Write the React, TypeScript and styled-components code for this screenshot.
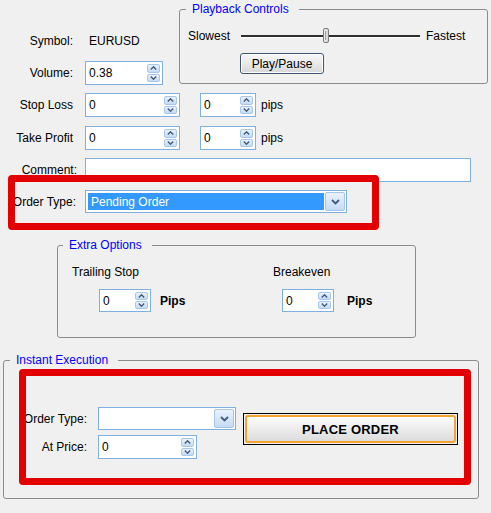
import React from 'react';
import styled, { createGlobalStyle } from 'styled-components';

const GlobalStyle = createGlobalStyle`
  html, body {
    margin: 0;
    padding: 0;
    background: #f0f0f0;
  }
  body {
    font-family: "Liberation Sans", Arial, sans-serif;
    font-size: 12px;
    color: #000;
  }
`;

const Window = styled.div`
  position: relative;
  width: 491px;
  height: 513px;
  overflow: hidden;
  display: flex;
  flex-direction: column;
  align-items: flex-start;
`;

const TopRow = styled.div`
  display: flex;
  align-items: flex-start;
  height: 85px;
`;

const LeftCol = styled.div`
  width: 179px;
  display: flex;
  flex-direction: column;
`;

const Row = styled.div<{ $top: number; $h?: number }>`
  display: flex;
  align-items: center;
  margin-top: ${p => p.$top}px;
  height: ${p => p.$h ?? 24}px;
`;

const Label = styled.span<{ $w?: number; $pad?: number }>`
  box-sizing: border-box;
  flex: none;
  width: ${p => p.$w ?? 85}px;
  padding-right: ${p => p.$pad ?? 12}px;
  text-align: right;
  white-space: nowrap;
  line-height: 14px;
`;

const Value = styled.span`
  margin-left: 4px;
  line-height: 14px;
`;

const Unit = styled.span<{ $gap: number; $bold?: boolean }>`
  margin-left: ${p => p.$gap}px;
  font-weight: ${p => (p.$bold ? 'bold' : 'normal')};
  line-height: 14px;
`;

/* group boxes */
const Group = styled.fieldset<{ $left: number; $top: number; $w: number; $h: number }>`
  box-sizing: border-box;
  margin: ${p => p.$top}px 0 0 ${p => p.$left}px;
  padding: 0;
  width: ${p => p.$w}px;
  height: ${p => p.$h}px;
  min-inline-size: 0;
  border: 1px solid #8c8c8c;
  border-radius: 3px;
`;

const Legend = styled.legend<{ $ml: number }>`
  margin-left: ${p => p.$ml}px;
  padding: 0 10px 0 6px;
  color: #0000ff;
  line-height: 14px;
`;

/* inputs */
const TextBox = styled.div<{ $w: number; $h?: number }>`
  box-sizing: border-box;
  flex: none;
  display: flex;
  align-items: center;
  width: ${p => p.$w}px;
  height: ${p => p.$h ?? 24}px;
  padding: 2px 2px 2px 3px;
  border: 1px solid #7eb0e3;
  background: #fff;
`;

const BoxText = styled.span`
  flex: 1;
  line-height: 14px;
`;

const Spinner = styled.div`
  display: flex;
  flex-direction: column;
  gap: 1px;
  width: 13px;
  align-self: stretch;
`;

const NubButton = styled.div`
  box-sizing: border-box;
  flex: 1;
  display: flex;
  align-items: center;
  justify-content: center;
  border: 1px solid #a6c6ea;
  border-radius: 2px;
  background: linear-gradient(#e9f2fc, #c4dbf4);
`;

const Combo = styled.div<{ $w: number }>`
  box-sizing: border-box;
  flex: none;
  display: flex;
  width: ${p => p.$w}px;
  height: 23px;
  padding: 1px;
  border: 1px solid #7eb0e3;
  background: #fff;
`;

const ComboText = styled.div<{ $selected?: boolean }>`
  flex: 1;
  display: flex;
  align-items: center;
  margin: 1px;
  padding-left: 3px;
  background: ${p => (p.$selected ? '#3399ff' : 'transparent')};
  color: ${p => (p.$selected ? '#fff' : '#000')};
  line-height: 14px;
`;

const DropButton = styled(NubButton)`
  flex: none;
  width: 20px;
`;

/* playback */
const SliderRow = styled.div`
  display: flex;
  align-items: center;
  height: 16px;
  margin: 12px 0 0 8px;
`;

const Track = styled.div`
  position: relative;
  width: 179px;
  height: 2px;
  margin: 0 6px 0 11px;
  background: #2e2e2e;
  border-bottom: 1px solid #fff;
`;

const Thumb = styled.div`
  position: absolute;
  left: 82px;
  top: -7px;
  box-sizing: border-box;
  width: 6px;
  height: 15px;
  border: 1px solid #7a7a7a;
  border-radius: 2px;
  background: linear-gradient(to right, #f2f2f2, #d4d4d4);

  &::after {
    content: '';
    position: absolute;
    left: 1px;
    top: 2px;
    bottom: 2px;
    width: 1px;
    background: #8fa890;
  }
`;

const PushButton = styled.div`
  box-sizing: border-box;
  display: flex;
  align-items: center;
  justify-content: center;
  width: 84px;
  height: 21px;
  margin: 9px 0 0 60px;
  border: 1px solid #3e5674;
  border-radius: 3px;
  background: linear-gradient(#f7f7f7, #e9e9e9 50%, #d7d7d7);
  box-shadow: inset 0 0 0 1px #fff;
  line-height: 14px;
`;

/* extra options */
const OptionsRow = styled.div`
  display: flex;
  margin: 13px 0 0 14px;
`;

const OptionCol = styled.div<{ $w?: number }>`
  display: flex;
  flex-direction: column;
  width: ${p => (p.$w ? `${p.$w}px` : 'auto')};
`;

const OptionTitle = styled.div`
  line-height: 14px;
`;

const OptionField = styled.div<{ $indent: number }>`
  display: flex;
  align-items: center;
  margin: 10px 0 0 ${p => p.$indent}px;
`;

/* instant execution */
const ExecRow = styled.div`
  display: flex;
  align-items: flex-start;
  margin-top: 40px;
`;

const ExecForm = styled.div`
  display: flex;
  flex-direction: column;
  gap: 5px;
`;

const ExecLine = styled.div`
  display: flex;
  align-items: center;
`;

const PlaceButton = styled.div`
  box-sizing: border-box;
  width: 215px;
  height: 32px;
  margin: 6px 0 0 7px;
  padding: 1px;
  border: 1px solid #000;
`;

const PlaceFace = styled.div`
  box-sizing: border-box;
  display: flex;
  align-items: center;
  justify-content: center;
  height: 100%;
  border: 2px solid #f2a332;
  border-radius: 3px;
  background: linear-gradient(#fcfcfc, #ececec 50%, #dcdcdc);
  font-weight: bold;
  font-size: 13px;
  letter-spacing: 0.2px;
`;

/* red annotation frames drawn over the form */
const Highlight = styled.div<{ $x: number; $y: number; $w: number; $h: number }>`
  position: absolute;
  left: ${p => p.$x}px;
  top: ${p => p.$y}px;
  width: ${p => p.$w}px;
  height: ${p => p.$h}px;
  box-sizing: border-box;
  border: 7px solid #e30000;
  border-radius: 4px;
  pointer-events: none;
`;

const Chevron = ({ up, w = 7 }: { up?: boolean; w?: number }) => (
  <svg width={w} height={4} viewBox="0 0 7 4">
    <path
      d={up ? 'M0.8 3.5 L3.5 0.8 L6.2 3.5' : 'M0.8 0.5 L3.5 3.2 L6.2 0.5'}
      fill="none"
      stroke="#405a7e"
      strokeWidth={1.4}
    />
  </svg>
);

const SpinBox = ({ value, w, h }: { value: string; w: number; h?: number }) => (
  <TextBox $w={w} $h={h}>
    <BoxText>{value}</BoxText>
    <Spinner>
      <NubButton>
        <Chevron up />
      </NubButton>
      <NubButton>
        <Chevron />
      </NubButton>
    </Spinner>
  </TextBox>
);

const DropDown = ({ w, text }: { w: number; text?: string }) => (
  <Combo $w={w}>
    <ComboText $selected={!!text}>{text}</ComboText>
    <DropButton>
      <svg width={9} height={6} viewBox="0 0 9 6">
        <path d="M1 1 L4.5 4.5 L8 1" fill="none" stroke="#405a7e" strokeWidth={1.8} />
      </svg>
    </DropButton>
  </Combo>
);

export default function App() {
  return (
    <>
      <GlobalStyle />
      <Window>
        <TopRow>
          <LeftCol>
            <Row $top={31} $h={20}>
              <Label>Symbol:</Label>
              <Value>EURUSD</Value>
            </Row>
            <Row $top={10}>
              <Label>Volume:</Label>
              <SpinBox value="0.38" w={78} />
            </Row>
          </LeftCol>
          <Group $left={0} $top={2} $w={309} $h={82}>
            <Legend $ml={6}>Playback Controls</Legend>
            <SliderRow>
              <span>Slowest</span>
              <Track>
                <Thumb />
              </Track>
              <span>Fastest</span>
            </SliderRow>
            <PushButton>Play/Pause</PushButton>
          </Group>
        </TopRow>

        <Row $top={8}>
          <Label>Stop Loss</Label>
          <SpinBox value="0" w={95} />
          <Unit $gap={20}>
            <SpinBox value="0" w={56} />
          </Unit>
          <Unit $gap={5}>pips</Unit>
        </Row>
        <Row $top={9}>
          <Label>Take Profit</Label>
          <SpinBox value="0" w={95} />
          <Unit $gap={20}>
            <SpinBox value="0" w={56} />
          </Unit>
          <Unit $gap={5}>pips</Unit>
        </Row>
        <Row $top={8}>
          <Label $pad={8}>Comment:</Label>
          <TextBox $w={386} />
        </Row>
        <Row $top={8} $h={23}>
          <Label $pad={9}>Order Type:</Label>
          <DropDown w={262} text="Pending Order" />
        </Row>

        <Group $left={57} $top={25} $w={359} $h={100}>
          <Legend $ml={5}>Extra Options</Legend>
          <OptionsRow>
            <OptionCol $w={201}>
              <OptionTitle>Trailing Stop</OptionTitle>
              <OptionField $indent={27}>
                <SpinBox value="0" w={52} h={23} />
                <Unit $gap={9} $bold>Pips</Unit>
              </OptionField>
            </OptionCol>
            <OptionCol>
              <OptionTitle>Breakeven</OptionTitle>
              <OptionField $indent={9}>
                <SpinBox value="0" w={52} h={23} />
                <Unit $gap={13} $bold>Pips</Unit>
              </OptionField>
            </OptionCol>
          </OptionsRow>
        </Group>

        <Group $left={3} $top={15} $w={476} $h={146}>
          <Legend $ml={6}>Instant Execution</Legend>
          <ExecRow>
            <ExecForm>
              <ExecLine>
                <Label $w={94} $pad={11}>Order Type:</Label>
                <DropDown w={138} />
              </ExecLine>
              <ExecLine>
                <Label $w={94} $pad={11}>At Price:</Label>
                <SpinBox value="0" w={99} />
              </ExecLine>
            </ExecForm>
            <PlaceButton>
              <PlaceFace>PLACE ORDER</PlaceFace>
            </PlaceButton>
          </ExecRow>
        </Group>

        <Highlight $x={8} $y={175} $w={371} $h={55} />
        <Highlight $x={19} $y={369} $w={452} $h={116} />
      </Window>
    </>
  );
}
